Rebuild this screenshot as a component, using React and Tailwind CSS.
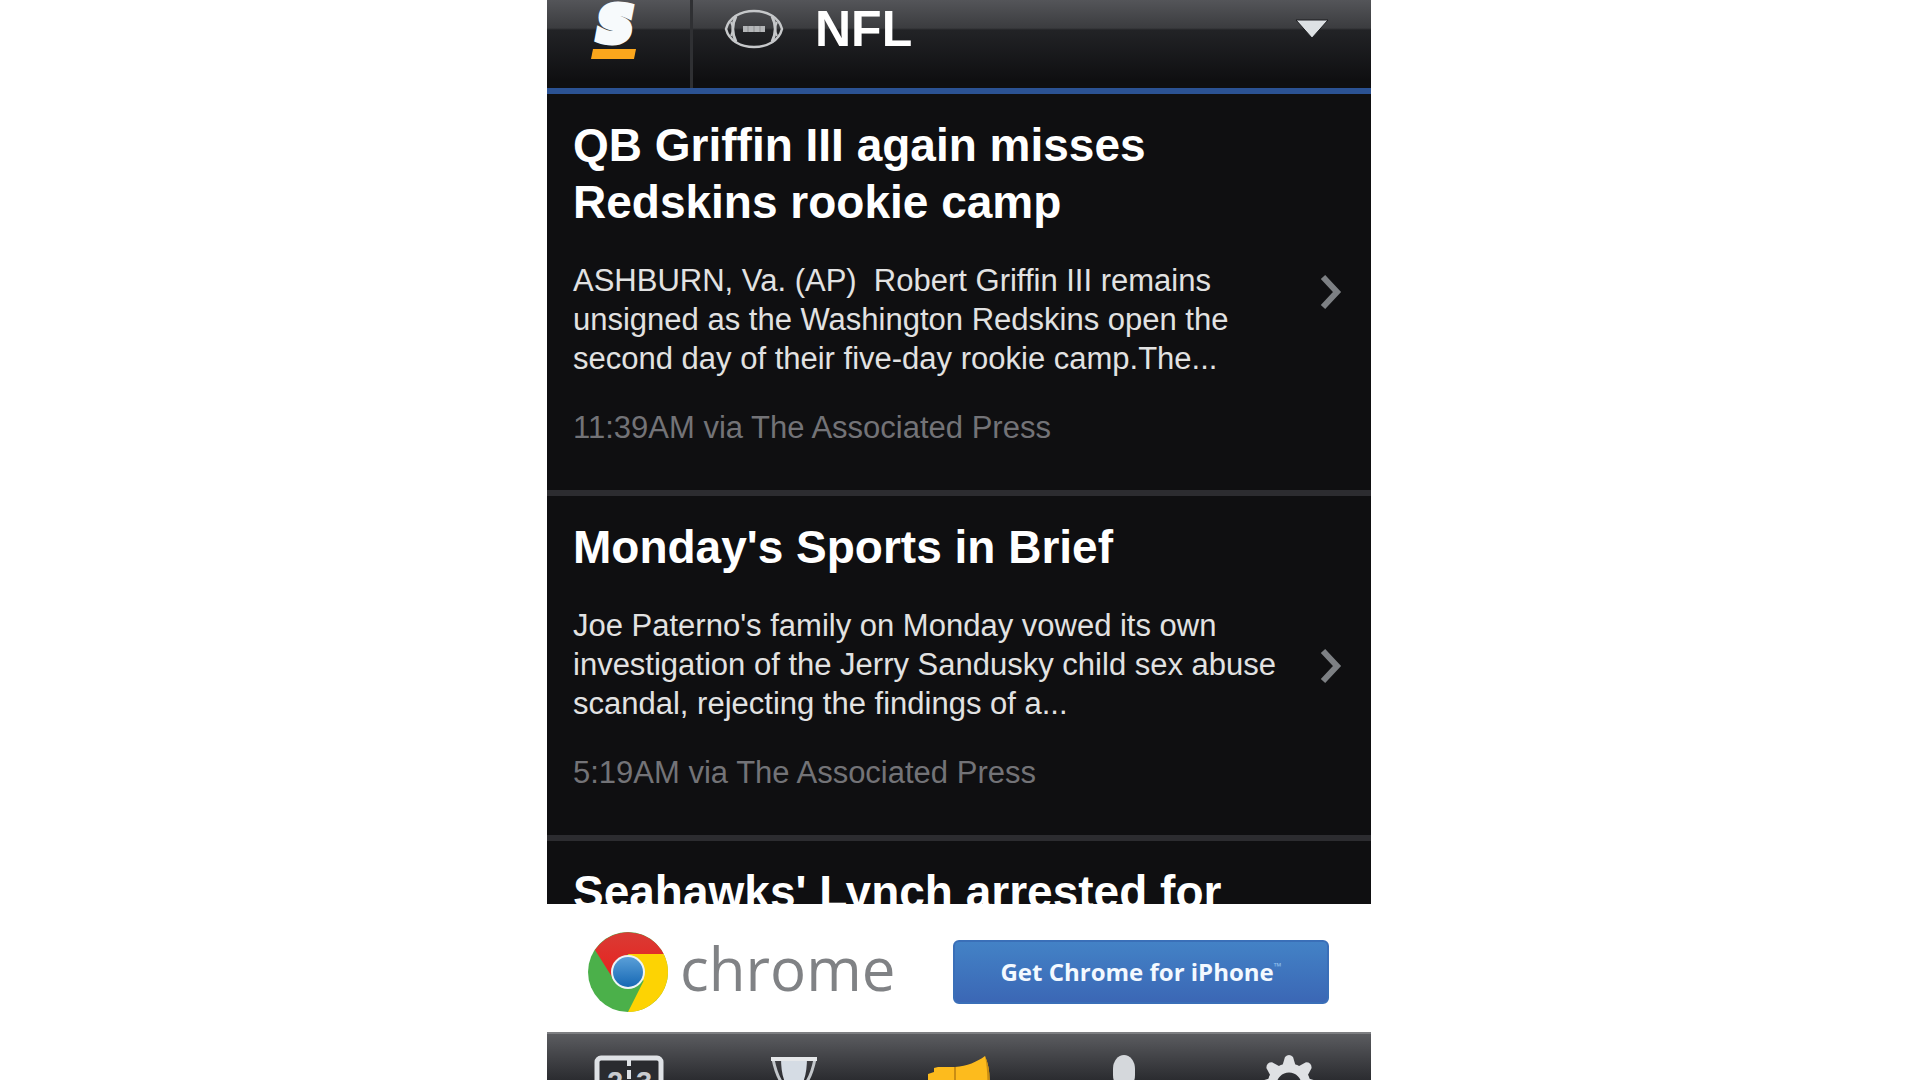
import React from "react";

const STORIES = [
  {
    title: "QB Griffin III again misses Redskins rookie camp",
    summary:
      "ASHBURN, Va. (AP) \u00a0Robert Griffin III remains unsigned as the Washington Redskins open the second day of their five-day rookie camp.The...",
    meta: "11:39AM via The Associated Press",
  },
  {
    title: "Monday's Sports in Brief",
    summary:
      "Joe Paterno's family on Monday vowed its own investigation of the Jerry Sandusky child sex abuse scandal, rejecting the findings of a...",
    meta: "5:19AM via The Associated Press",
  },
  { title: "Seahawks' Lynch arrested for" },
];

const TABS = [
  { label: "Scores", Icon: ScoresIcon },
  { label: "Leagues", Icon: TrophyIcon },
  { label: "News", Icon: MegaphoneIcon },
  { label: "Players", Icon: PlayerIcon },
  { label: "Settings", Icon: GearIcon },
];

function LogoIcon() {
  return (
    <svg width="56" height="60" viewBox="0 0 56 60" aria-hidden="true">
      <text x="9" y="41" fontFamily="DejaVu Sans, sans-serif" fontWeight="700" fontStyle="italic" fontSize="48" fill="#f7fafc" stroke="#f7fafc" strokeWidth="8">S</text>
      <path d="M4 49h43l-2 10H2z" fill="#fba61c" />
    </svg>
  );
}

function FootballIcon() {
  return (
    <svg width="60" height="40" viewBox="0 0 60 40" fill="none" stroke="#c6c8ca" strokeWidth="2.5" aria-hidden="true">
      <path d="M2 20C5 8 17 2 30 2s25 6 28 18c-3 12-15 18-28 18S5 32 2 20z" />
      <path d="M12 7c-4 8-4 18 0 26M48 7c4 8 4 18 0 26" strokeWidth="3" />
      <path d="M7 13c2 4 2 10 0 14M53 13c-2 4-2 10 0 14" strokeWidth="2" />
      <path d="M19 20h22" stroke="#b4b6b8" strokeWidth="6" />
      <path d="M24 17v6M30 17v6M36 17v6" stroke="#8c8e90" strokeWidth="1" />
    </svg>
  );
}

function Chevron() {
  return (
    <svg width="24" height="36" viewBox="0 0 24 36" fill="none" className="shrink-0" aria-hidden="true">
      <path d="M4 3l14 15L4 33" stroke="#7d8084" strokeWidth="6" />
    </svg>
  );
}

function ChromeIcon() {
  return (
    <svg width="80" height="80" viewBox="-40 -40 80 80" className="shrink-0" aria-hidden="true">
      <defs>
        <linearGradient id="red" x1="0" y1="0" x2="0" y2="1">
          <stop offset="0" stopColor="#d93b34" />
          <stop offset="1" stopColor="#e8221f" />
        </linearGradient>
        <linearGradient id="blue" x1="0" y1="0" x2="0" y2="1">
          <stop offset="0" stopColor="#5a9fd8" />
          <stop offset="1" stopColor="#1668b4" />
        </linearGradient>
      </defs>
      <circle r="40" fill="#4bb04a" />
      <path d="M0-18H35.7A40 40 0 0 1 0 40L15.6 9z" fill="#fdd303" />
      <path d="M35.7-18A40 40 0 0 0-33-22L-16 5 0-18z" fill="url(#red)" />
      <circle r="17" fill="#eef4f6" />
      <circle r="15" fill="url(#blue)" />
    </svg>
  );
}

function ScoresIcon() {
  return (
    <svg width="70" height="50" viewBox="0 0 70 50" aria-hidden="true">
      <rect x="3" y="3" width="64" height="50" rx="4" fill="#2a2b2f" stroke="#dfe2e6" strokeWidth="5" />
      <path d="M35 3v8M35 15v9" stroke="#dfe2e6" strokeWidth="4" />
      <g fontFamily="Liberation Sans, sans-serif" fontWeight="700" fontSize="29" fill="#c9ccd0">
        <text x="13" y="37">2</text>
        <text x="42" y="37">3</text>
      </g>
    </svg>
  );
}

function TrophyIcon() {
  return (
    <svg width="48" height="50" viewBox="0 0 48 50" aria-hidden="true">
      <path d="M11 2h26c0 14-2 26-9 32v10h-8V34C13 28 11 16 11 2z" fill="#d5dce4" />
      <path d="M13 4H3c2 10 4 17 9 24M35 4h10c-2 10-4 17-9 24" fill="none" stroke="#c3c7cb" strokeWidth="3" />
      <path d="M1 4h46" stroke="#e6e8ea" strokeWidth="4" />
    </svg>
  );
}

function MegaphoneIcon() {
  return (
    <svg width="64" height="50" viewBox="0 0 64 50" aria-hidden="true">
      <path d="M1 19l6-2v-4l4-1h17C40 11 50 7 58 1c6 14 6 30 1 45-9-7-19-10-31-10H7v-5l-6-1z" fill="#fdbb1d" />
      <path d="M58 1c6 14 6 30 1 45 2-14 2-30-1-45z" fill="#c98d13" />
      <path d="M28 12v24" stroke="#c98d13" strokeWidth="2" />
    </svg>
  );
}

function PlayerIcon() {
  return (
    <svg width="48" height="50" viewBox="0 0 48 50" fill="#d5d8dc" aria-hidden="true">
      <rect x="13" y="0" width="22" height="34" rx="11" ry="14" />
      <path d="M2 50c0-10 6-15 14-17h16c8 2 14 7 14 17z" />
    </svg>
  );
}

function GearIcon() {
  return (
    <svg width="60" height="60" viewBox="-30 -30 60 60" aria-hidden="true">
      <g fill="#dfe1e4">
        {[0, 45, 90, 135, 180, 225, 270, 315].map((a) => (
          <path key={a} d="M-7-18L-4-28Q0-32 4-28L7-18z" transform={`rotate(${a})`} />
        ))}
      </g>
      <circle r="17" fill="none" stroke="#dfe1e4" strokeWidth="9" />
    </svg>
  );
}

function Story({ title, summary, meta }) {
  return (
    <li className="border-b-6 border-[#2c2c30]">
      <a href="#" className="flex items-center gap-5 pl-[26px] pr-7">
        <div className="flex-1 pt-[23px] pb-[43px]">
          <h2 className="text-[46px] leading-[57px] font-bold text-white">{title}</h2>
          {summary && <p className="mt-[30px] text-[31px] leading-[39px] text-[#e2e2e2]">{summary}</p>}
          {meta && <p className="mt-[30px] text-[31px] leading-[39px] text-[#737377]">{meta}</p>}
        </div>
        {summary && <Chevron />}
      </a>
    </li>
  );
}

export default function App() {
  return (
    <div className="h-screen overflow-hidden bg-white pr-0.5 font-['Liberation_Sans',Arial,sans-serif]">
      <div className="mx-auto flex h-full max-w-[824px] flex-col bg-[#0f0f11]">
        <header className="flex h-[94px] shrink-0 border-b-6 border-[#2b5293] bg-[linear-gradient(to_bottom,#545559_0,#3b3c3f_28px,#222326_30px,#0f0f11_80px)]">
          <button aria-label="Home" className="flex w-[146px] items-start justify-center border-r-3 border-[#2f3033] pr-1">
            <LogoIcon />
          </button>
          <button className="flex flex-1 items-center pb-[30px] pl-[31px] pr-[42px] text-left">
            <FootballIcon />
            <span className="ml-[31px] flex-1 text-[50px] leading-[58px] font-bold text-white">NFL</span>
            <svg width="34" height="20" viewBox="0 0 34 20" aria-hidden="true">
              <path d="M1 1h32L17 19z" fill="#dde1e4" stroke="#1c1d20" strokeWidth="1" />
            </svg>
          </button>
        </header>

        <ul className="min-h-0 flex-1 overflow-hidden">
          {STORIES.map((s) => (
            <Story key={s.title} {...s} />
          ))}
        </ul>

        {/* Ad banner */}
        <div className="flex shrink-0 items-center bg-white pt-7 pb-5 pl-[41px] pr-[42px]">
          <ChromeIcon />
          <span className="ml-3 flex-1 pb-2 font-['Open_Sans',sans-serif] text-[60px] leading-[64px] text-[#808285]">chrome</span>
          <button className="flex h-16 w-[376px] items-center justify-center rounded-md border-2 border-[#3a6fb8] bg-linear-to-b from-[#4382c6] to-[#3b67b5] font-['Open_Sans',sans-serif] text-[24px] font-bold text-[#f3f9ff]">
            Get Chrome for iPhone
            <span className="self-start pt-4 text-[10px] leading-[16px] text-[#8fc0ee]">™</span>
          </button>
        </div>

        <nav className="grid h-12 shrink-0 grid-cols-5 overflow-hidden border-t-2 border-[#7e7f82] bg-linear-to-b from-[#5b5c60] to-[#2b2c30]">
          {TABS.map(({ label, Icon }) => (
            <button key={label} aria-label={label} className="flex items-start justify-center pt-[21px]">
              <Icon />
            </button>
          ))}
        </nav>
      </div>
    </div>
  );
}
